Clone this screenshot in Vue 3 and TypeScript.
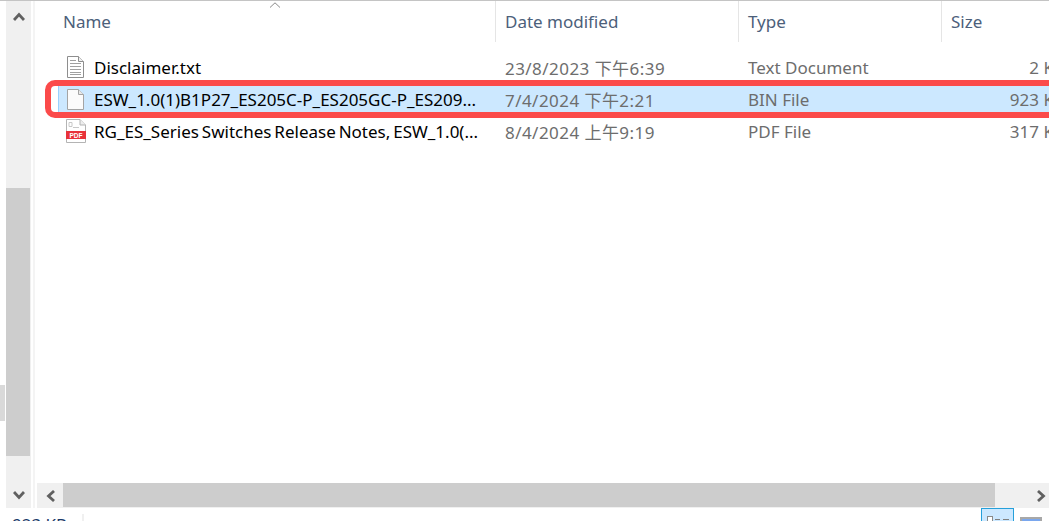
<script setup lang="ts">
interface FileRow {
  name: string
  date: string
  type: string
  size: string
  icon: 'txt' | 'bin' | 'pdf'
  selected?: boolean
}

const rows: FileRow[] = [
  { name: 'Disclaimer.txt', date: '23/8/2023 下午6:39', type: 'Text Document', size: '2 KB', icon: 'txt' },
  { name: 'ESW_1.0(1)B1P27_ES205C-P_ES205GC-P_ES209...', date: '7/4/2024 下午2:21', type: 'BIN File', size: '923 KB', icon: 'bin', selected: true },
  { name: 'RG_ES_Series Switches Release Notes, ESW_1.0(...', date: '8/4/2024 上午9:19', type: 'PDF File', size: '317 KB', icon: 'pdf' }
]
</script>

<template>
  <div class="window">
    <div class="main">
      <div class="gutter"><span class="gutter-mark"></span></div>
      <div class="vscroll">
        <button class="sbtn" type="button">
          <svg width="12" height="9" viewBox="0 0 12 9"><path d="M1 8 L6 2.500 L11 8" fill="none" stroke="#606060" stroke-width="2.800" /></svg>
        </button>
        <div class="vtrack"><div class="vthumb"></div></div>
        <button class="sbtn end" type="button">
          <svg width="12" height="9" viewBox="0 0 12 9"><path d="M1 1 L6 6.500 L11 1" fill="none" stroke="#606060" stroke-width="2.800" /></svg>
        </button>
      </div>
      <div class="pane">
        <div class="list">
          <div class="head">
            <svg class="sort" width="12" height="6" viewBox="0 0 12 6"><path d="M1 5.500 L6 .8 L11 5.500" fill="none" stroke="#8a8a8a" /></svg>
            <div class="hcell c-name">Name</div>
            <div class="hcell c-date">Date modified</div>
            <div class="hcell c-type">Type</div>
            <div class="hcell c-size">Size</div>
          </div>
          <div class="rows">
            <div v-for="row in rows" :key="row.name" class="row" :class="{ selected: row.selected }">
              <div class="cell r-name name">
                <svg v-if="row.icon === 'txt'" class="ficon small" width="17" height="22" viewBox="0 0 17 22">
                  <path d="M.5.5H11.500L16.500 5.500V21.500H.5Z" fill="#fff" stroke="#8e8e8e" />
                  <path d="M11.500.5V5.500H16.500" fill="#f0f0f0" stroke="#8e8e8e" />
                  <path d="M3 4.500H9M3 7.500H14M3 10.500H14M3 13.500H14M3 16.500H14M3 18.500H14" stroke="#a0a0a0" />
                </svg>
                <svg v-else-if="row.icon === 'bin'" class="ficon small" width="17" height="21" viewBox="0 0 17 21">
                  <path d="M.5.5H11.500L16.500 5.500V20.500H.5Z" fill="#fbfbfb" stroke="#a4a4a4" />
                  <path d="M11.500.5V5.500H16.500" fill="#e8e8e8" stroke="#a4a4a4" />
                </svg>
                <svg v-else class="ficon pdf" width="20" height="24" viewBox="0 0 20 24">
                  <path d="M.5.5H14L19.500 6V23.500H.5Z" fill="#fff" stroke="#b4b4b4" />
                  <path d="M14 .5V6H19.500" fill="#eee" stroke="#b4b4b4" />
                  <path d="M3 3.500H6V7.500H3ZM7 8.500H13" fill="none" stroke="#c8c8c8" />
                  <rect x="0" y="12" width="20" height="8" fill="#e8323a" />
                  <text x="10" y="18.500" class="pdf-label">PDF</text>
                </svg>
                <span class="name-text">{{ row.name }}</span>
              </div>
              <div class="cell r-date meta">{{ row.date }}</div>
              <div class="cell r-type meta">{{ row.type }}</div>
              <div class="cell r-size meta">{{ row.size }}</div>
            </div>
          </div>
        </div>
        <div class="hscroll">
          <button class="hbtn" type="button">
            <svg width="9" height="12" viewBox="0 0 9 12"><path d="M8 1 L2.500 6 L8 11" fill="none" stroke="#606060" stroke-width="2.800" /></svg>
          </button>
          <div class="htrack"><div class="hthumb"></div></div>
          <button class="hbtn right" type="button">
            <svg width="9" height="12" viewBox="0 0 9 12"><path d="M1 1 L6.500 6 L1 11" fill="none" stroke="#606060" stroke-width="2.800" /></svg>
          </button>
        </div>
      </div>
    </div>
    <div class="status">
      <span class="count">923 KB</span>
      <span class="divider"></span>
      <div class="views">
        <span class="view active">
          <svg class="view-icon" width="31" height="13" viewBox="0 0 31 13"><rect x="5.500" y="7.500" width="5" height="5" fill="#fff" stroke="#8a8a8a" /><path d="M13 10.500H18M21 10.500H27" stroke="#808080" /></svg>
        </span>
        <span class="view second"></span>
      </div>
    </div>
    <div class="highlight"></div>
  </div>
</template>

<style scoped>
.window {
  position: relative;
  width: 1049px;
  height: 521px;
  overflow: hidden;
  background: #fff;
  border-top: 1px solid #c4c4c4;
  box-sizing: border-box;
  display: flex;
  flex-direction: column;
  font-family: "Noto Sans", "Noto Sans CJK TC", sans-serif;
}

.main {
  flex: 1;
  min-height: 0;
  display: flex;
}

.gutter {
  width: 6px;
  padding-top: 384px;
}

.gutter-mark {
  display: block;
  width: 5px;
  height: 36px;
  background: #d9d9d9;
}

.vscroll {
  width: 25px;
  background: #f0f0f0;
  display: flex;
  flex-direction: column;
}

.sbtn {
  height: 30px;
  padding: 0;
  border: 0;
  background: none;
  display: flex;
  align-items: center;
  justify-content: center;
}

.sbtn.end {
  height: 25px;
}

.vtrack {
  flex: 1;
  padding-top: 157px;
  padding-bottom: 27px;
  display: flex;
}

.vthumb {
  flex: 1;
  margin-right: 1px;
  background: #cdcdcd;
}

.pane {
  flex: 1;
  min-width: 0;
  margin-left: 2px;
  border-left: 2px solid #f4f4f4;
  padding-left: 2px;
  display: flex;
  flex-direction: column;
}

.list {
  flex: 1;
  min-height: 0;
  overflow: hidden;
}

.head {
  position: relative;
  height: 41px;
  padding-left: 17px;
  display: flex;
}

.sort {
  position: absolute;
  left: 232px;
  top: 1px;
}

.hcell {
  flex: none;
  box-sizing: border-box;
  padding-top: 10px;
  padding-left: 9px;
  font-size: 17px;
  line-height: 22px;
  color: #4c607a;
  border-right: 1px solid #e5e5e5;
}

.c-name {
  width: 442px;
}

.c-date {
  width: 243px;
}

.c-type {
  width: 203px;
}

.c-size {
  width: 120px;
  border-right: 0;
}

.rows {
  padding-top: 9px;
}

.row {
  height: 32px;
  margin-left: 21px;
  display: flex;
  align-items: center;
  box-sizing: border-box;
}

.row.selected {
  background: #cce8ff;
  box-shadow: inset 1px 0 0 #99d1ff;
}

.cell {
  flex: none;
  box-sizing: border-box;
  white-space: nowrap;
  padding-left: 9px;
  font-size: 17px;
}

.r-name {
  width: 438px;
  word-spacing: -1.500px;
}

.r-date {
  width: 243px;
  letter-spacing: .45px;
}

.r-type {
  width: 203px;
}

.r-size {
  width: 123px;
  padding-left: 0;
  text-align: right;
}

.name {
  display: flex;
  align-items: center;
  padding-left: 8px;
  color: #000;
}

.ficon {
  flex: none;
}

.ficon.small {
  margin: 0 10px 0 1px;
}

.ficon.pdf {
  margin: 0 8px 0 0;
}

.pdf-label {
  font: bold 6.500px "Liberation Sans", sans-serif;
  fill: #fff;
  text-anchor: middle;
}

.meta {
  color: #6d6d6d;
}

.hscroll {
  height: 25px;
  background: #f0f0f0;
  display: flex;
}

.hbtn {
  width: 26px;
  padding: 0;
  border: 0;
  background: none;
  display: flex;
  align-items: center;
  justify-content: center;
}

.hbtn.right {
  justify-content: flex-end;
  padding-right: 3px;
}

.htrack {
  flex: 1;
  padding-right: 28px;
  display: flex;
}

.hthumb {
  flex: 1;
  margin-bottom: 1px;
  background: #cdcdcd;
}

.status {
  height: 13px;
  flex: none;
  display: flex;
  align-items: flex-start;
  overflow: hidden;
}

.count {
  margin-left: 12px;
  width: 70px;
  margin-top: 6px;
  font-size: 17px;
  line-height: 22px;
  color: #1a3a6a;
  white-space: nowrap;
}

.divider {
  width: 2px;
  height: 7px;
  margin-top: 6px;
  background: #f0f0f0;
}

.views {
  margin-left: auto;
  display: flex;
  align-items: flex-start;
  gap: 6px;
  padding-right: 7px;
}

.view {
  box-sizing: border-box;
  display: block;
}

.view-icon {
  display: block;
}

.view.active {
  width: 33px;
  height: 20px;
  background: #cce8ff;
  border: 1px solid #26a0da;
}

.view.second {
  width: 22px;
  height: 20px;
  margin-top: 9px;
  border: 2px solid #a8a8a8;
  background: #7aa7ee;
}

/* red annotation drawn over the selected row */
.highlight {
  position: absolute;
  left: 45px;
  top: 79px;
  width: 1030px;
  height: 38px;
  box-sizing: border-box;
  border: 6px solid #fb4a4a;
  border-radius: 10px;
  pointer-events: none;
}
</style>
